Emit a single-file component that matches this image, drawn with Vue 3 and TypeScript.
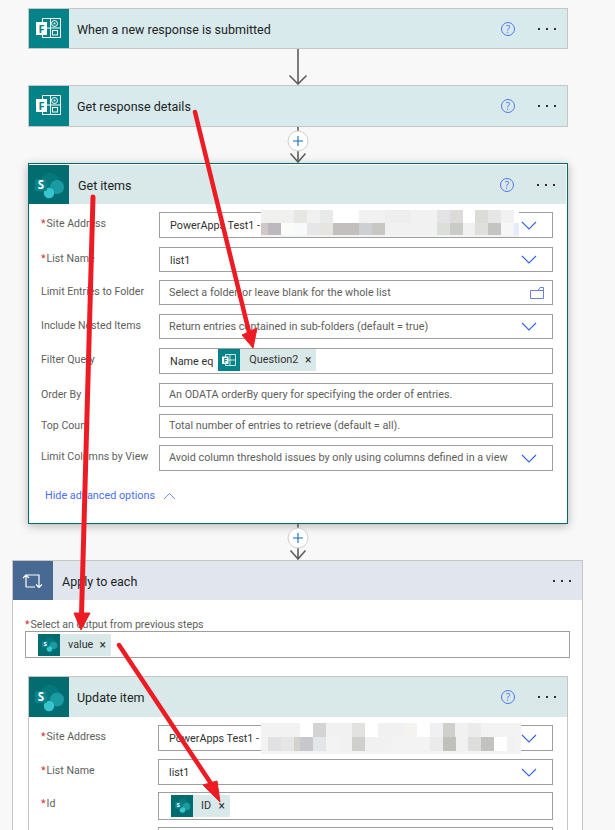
<script setup lang="ts">
interface Row {
  label: string
  req?: boolean
  value?: string
  hint?: string
  kind?: 'select' | 'folder'
  chip?: { icon: 'forms' | 'sp'; text: string; width: number; textGap: number }
  h: number
  gap: number
}
type Cell = [number, string]

const getRows: Row[] = [
  { label: 'Site Address', req: true, value: 'PowerApps Test1 -', kind: 'select', h: 26, gap: 0 },
  { label: 'List Name', req: true, value: 'list1', kind: 'select', h: 25, gap: 9 },
  { label: 'Limit Entries to Folder', hint: 'Select a folder, or leave blank for the whole list', kind: 'folder', h: 25, gap: 8 },
  { label: 'Include Nested Items', hint: 'Return entries contained in sub-folders (default = true)', kind: 'select', h: 25, gap: 9 },
  { label: 'Filter Query', value: 'Name eq', chip: { icon: 'forms', text: 'Question2', width: 98, textGap: 9 }, h: 26, gap: 9 },
  { label: 'Order By', hint: 'An ODATA orderBy query for specifying the order of entries.', h: 24, gap: 9 },
  { label: 'Top Count', hint: 'Total number of entries to retrieve (default = all).', h: 24, gap: 7 },
  { label: 'Limit Columns by View', hint: 'Avoid column threshold issues by only using columns defined in a view', kind: 'select', h: 26, gap: 7 }
]

const updateRows: Row[] = [
  { label: 'Site Address', req: true, value: 'PowerApps Test1 -', kind: 'select', h: 26, gap: 0 },
  { label: 'List Name', req: true, value: 'list1', kind: 'select', h: 26, gap: 8 },
  { label: 'Id', req: true, chip: { icon: 'sp', text: 'ID', width: 59, textGap: 8 }, h: 28, gap: 7 },
  { label: '', h: 26, gap: 7 }
]

const blurA: Cell[][] = [
  [[99, '#f0f0ef'], [39, '#e6e6e2'], [39, '#f0f0f0'], [39, '#e8eaea'], [78, '#fff'], [78, '#f1f1f1'], [78, '#eee'], [78, '#f1f1f1'], [39, '#e3e3e6'], [39, '#dcdbd9'], [36, '#fff'], [39, '#dbdbd8'], [39, '#e6e6e6'], [39, '#f1f1f1'], [15, '#fff']],
  [[21, '#cfc8c6'], [39, '#bcb8bd'], [39, '#fbfbf9'], [39, '#f7f9fb'], [39, '#e6e6e8'], [39, '#e6e5df'], [78, '#c2bfbe'], [39, '#ccd0d3'], [39, '#c8c7c4'], [156, '#f1f1f1'], [39, '#dcdfd8'], [39, '#c9cbc7'], [36, '#f1f1f1'], [39, '#dfdfdc'], [39, '#c4c4c2'], [39, '#f6f6f6'], [15, '#e6ebfb']]
]

const blurB: Cell[][] = [
  [[117, '#f2f2f2'], [39, '#fff'], [39, '#d4d4d4'], [78, '#f1f1f1'], [39, '#e2e3e0'], [39, '#fff'], [78, '#f1f1f1'], [39, '#f4f3f0'], [39, '#fff'], [39, '#f0f0f2'], [36, '#cfcfcb'], [39, '#f1f1f1'], [39, '#ebebeb'], [60, '#f3f3f3']],
  [[21, '#f3f3f3'], [39, '#e1e1e4'], [39, '#e6e6e6'], [18, '#d5d2cd'], [39, '#c7c8cc'], [39, '#e3e6e9'], [39, '#f3f3f3'], [39, '#f1f1f1'], [39, '#cfcfcc'], [78, '#f1f1f1'], [117, '#f3f3f3'], [39, '#ebebeb'], [39, '#c0c1bb'], [36, '#f1f1f1'], [39, '#dededc'], [39, '#c2c2c0'], [39, '#fff'], [21, '#f1f1f1']]
]
</script>

<template>
  <div class="page">
    <!-- Trigger -->
    <section class="card card-first">
      <header class="head teal">
        <span class="icon forms">
          <svg width="40" height="39" viewBox="0 0 40 39">
            <path d="M13.5 9.5H31.5V28.5H13.5Z M21.5 9.5V28.5 M13.5 19H31.5" fill="none" stroke="#fff" />
            <circle cx="25.5" cy="14.5" r="3" fill="none" stroke="#fff" />
            <circle cx="25.5" cy="14.5" r="1" fill="#fff" />
            <rect x="23.5" y="21.5" width="5" height="4.5" fill="none" stroke="#fff" />
            <rect x="7" y="13" width="11" height="13" fill="#fff" />
            <text x="12.5" y="23.5" class="tile-f">F</text>
          </svg>
        </span>
        <span class="title">When a new response is submitted</span>
        <svg class="help" width="16" height="16" viewBox="0 0 16 16">
          <circle cx="8" cy="8" r="6.5" />
          <text x="8" y="11.5">?</text>
        </svg>
        <span class="dots"><i></i><i></i><i></i></span>
      </header>
    </section>

    <div class="link">
      <svg width="20" height="36" viewBox="0 0 20 36">
        <path d="M10 0V35M1.5 26.5L10 35L18.5 26.5" fill="none" stroke="#605e5c" stroke-width="1.6" />
      </svg>
    </div>

    <section class="card card-second">
      <header class="head teal">
        <span class="icon forms">
          <svg width="40" height="40" viewBox="0 0 40 40">
            <path d="M13.5 9.5H31.5V28.5H13.5Z M21.5 9.5V28.5 M13.5 19H31.5" fill="none" stroke="#fff" />
            <circle cx="25.5" cy="14.5" r="3" fill="none" stroke="#fff" />
            <circle cx="25.5" cy="14.5" r="1" fill="#fff" />
            <rect x="23.5" y="21.5" width="5" height="4.5" fill="none" stroke="#fff" />
            <rect x="7" y="13" width="11" height="13" fill="#fff" />
            <text x="12.5" y="23.5" class="tile-f">F</text>
          </svg>
        </span>
        <span class="title">Get response details</span>
        <svg class="help" width="16" height="16" viewBox="0 0 16 16">
          <circle cx="8" cy="8" r="6.5" />
          <text x="8" y="11.5">?</text>
        </svg>
        <span class="dots"><i></i><i></i><i></i></span>
      </header>
    </section>

    <div class="link">
      <svg width="24" height="36" viewBox="0 0 24 36">
        <path d="M12 0V35M4.5 26.5L12 35L19.5 26.5" fill="none" stroke="#605e5c" stroke-width="1.6" />
        <circle cx="12" cy="14" r="10" fill="#fff" stroke="#d2d0ce" />
        <path d="M12 9V19M7 14H17" stroke="#0f6cbd" stroke-width="1.1" />
      </svg>
    </div>

    <!-- Get items -->
    <section class="card selected">
      <header class="head teal-soft">
        <span class="icon sp">
          <svg width="40" height="39" viewBox="0 0 40 39">
            <circle cx="21" cy="17" r="9.5" fill="#06787c" />
            <circle cx="28" cy="22" r="7" fill="#1a9ba1" />
            <circle cx="20" cy="28" r="5.2" fill="#37c6d0" />
            <rect x="6" y="14" width="12" height="12" rx="1" fill="#07858b" />
            <text x="12" y="24" class="tile-s">S</text>
          </svg>
        </span>
        <span class="title title-get">Get items</span>
        <svg class="help" width="16" height="16" viewBox="0 0 16 16">
          <circle cx="8" cy="8" r="6.5" />
          <text x="8" y="11.5">?</text>
        </svg>
        <span class="dots"><i></i><i></i><i></i></span>
      </header>
      <div class="form form-get">
        <div v-for="r in getRows" :key="r.label" class="row" :style="{ marginTop: r.gap + 'px' }">
          <label class="lab"><em v-if="r.req">*</em>{{ r.label }}</label>
          <div class="field" :style="{ height: r.h + 'px' }">
            <span v-if="r.value" class="val">{{ r.value }}</span>
            <span v-if="r.hint" class="hint">{{ r.hint }}</span>
            <span v-if="r.chip" class="chip" :style="{ width: r.chip.width + 'px' }">
              <span class="chip-icon forms">
                <svg width="22" height="22" viewBox="0 0 22 22">
                  <path d="M7.5 5.5H17.5V16.5H7.5Z M12 5.5V16.5 M7.5 11H17.5" fill="none" stroke="#fff" stroke-width=".8" />
                  <rect x="4" y="7.5" width="6.5" height="7.5" fill="#fff" />
                  <text x="7.2" y="13.5" class="mini-f">F</text>
                </svg>
              </span>
              <span class="chip-text" :style="{ marginLeft: r.chip.textGap + 'px' }">{{ r.chip.text }}</span>
              <span class="chip-x">×</span>
            </span>
            <svg v-if="r.kind === 'select'" class="chev" width="16" height="9" viewBox="0 0 16 9">
              <path d="M1 1L8 8L15 1" fill="none" stroke="#3563ec" stroke-width="1.1" />
            </svg>
            <svg v-if="r.kind === 'folder'" class="folder" width="16" height="14" viewBox="0 0 16 14">
              <path d="M1.5 4.5H9L11 1.5H14.5V12.5H1.5Z M9 4.5H14.5" fill="none" stroke="#6a7fe0" />
            </svg>
          </div>
        </div>
        <div class="advanced">
          <span>Hide advanced options</span>
          <svg width="13" height="8" viewBox="0 0 13 8"><path d="M1 7L6.5 1.5L12 7" fill="none" stroke="#6d8cf0" /></svg>
        </div>
      </div>
    </section>

    <div class="link">
      <svg width="24" height="36" viewBox="0 0 24 36">
        <path d="M12 0V35M4.5 26.5L12 35L19.5 26.5" fill="none" stroke="#605e5c" stroke-width="1.6" />
        <circle cx="12" cy="14" r="10" fill="#fff" stroke="#d2d0ce" />
        <path d="M12 9V19M7 14H17" stroke="#0f6cbd" stroke-width="1.1" />
      </svg>
    </div>

    <!-- Apply to each -->
    <section class="loop">
      <header class="head slate">
        <span class="icon loop-icon">
          <svg width="40" height="39" viewBox="0 0 40 39">
            <path d="M13 26V14H26V26M10 17L13 14L16 17M23 23.5L26 26.5L29 23.5M13 26H22" fill="none" stroke="#fff" stroke-width="1.2" />
          </svg>
        </span>
        <span class="title title-loop">Apply to each</span>
        <span class="dots"><i></i><i></i><i></i></span>
      </header>
      <div class="loop-body">
        <label class="lab output"><em>*</em>Select an output from previous steps</label>
        <div class="field output-field">
          <span class="chip chip-value">
            <span class="chip-icon sp">
              <svg width="22" height="22" viewBox="0 0 22 22">
                <circle cx="12" cy="8.5" r="5" fill="#06787c" />
                <circle cx="15.5" cy="11.5" r="3.8" fill="#1a9ba1" />
                <circle cx="11.5" cy="15" r="2.8" fill="#37c6d0" />
                <rect x="4" y="7" width="6.5" height="6.5" fill="#07858b" />
                <text x="7.2" y="12.4" class="mini-s">S</text>
              </svg>
            </span>
            <span class="chip-text value-text">value</span>
            <span class="chip-x">×</span>
          </span>
        </div>

        <section class="card update">
          <header class="head teal-soft">
            <span class="icon sp">
              <svg width="39" height="40" viewBox="0 0 39 40">
                <circle cx="21" cy="17" r="9.5" fill="#06787c" />
                <circle cx="28" cy="22.5" r="7" fill="#1a9ba1" />
                <circle cx="20" cy="29" r="5.2" fill="#37c6d0" />
                <rect x="6" y="14" width="12" height="12" rx="1" fill="#07858b" />
                <text x="12" y="24" class="tile-s">S</text>
              </svg>
            </span>
            <span class="title">Update item</span>
            <svg class="help" width="16" height="16" viewBox="0 0 16 16">
              <circle cx="8" cy="8" r="6.5" />
              <text x="8" y="11.5">?</text>
            </svg>
            <span class="dots"><i></i><i></i><i></i></span>
          </header>
          <div class="form form-update">
            <div v-for="r in updateRows" :key="r.label" class="row" :style="{ marginTop: r.gap + 'px' }">
              <label class="lab"><em v-if="r.req">*</em>{{ r.label }}</label>
              <div class="field" :style="{ height: r.h + 'px' }">
                <span v-if="r.value" class="val">{{ r.value }}</span>
                <span v-if="r.chip" class="chip chip-id" :style="{ width: r.chip.width + 'px' }">
                  <span class="chip-icon sp">
                    <svg width="22" height="22" viewBox="0 0 22 22">
                      <circle cx="12" cy="8.5" r="5" fill="#06787c" />
                      <circle cx="15.5" cy="11.5" r="3.8" fill="#1a9ba1" />
                      <circle cx="11.5" cy="15" r="2.8" fill="#37c6d0" />
                      <rect x="4" y="7" width="6.5" height="6.5" fill="#07858b" />
                      <text x="7.2" y="12.4" class="mini-s">S</text>
                    </svg>
                  </span>
                  <span class="chip-text" :style="{ marginLeft: r.chip.textGap + 'px' }">{{ r.chip.text }}</span>
                  <span class="chip-x">×</span>
                </span>
                <svg v-if="r.kind === 'select'" class="chev" width="16" height="9" viewBox="0 0 16 9">
                  <path d="M1 1L8 8L15 1" fill="none" stroke="#3563ec" stroke-width="1.1" />
                </svg>
              </div>
            </div>
          </div>
        </section>
      </div>
    </section>

    <!-- Redaction mosaics -->
    <div class="mosaic mosaic-a">
      <div v-for="(line, i) in blurA" :key="i" class="mosaic-line">
        <i v-for="(c, j) in line" :key="j" :style="{ width: c[0] / 3 + 'px', background: c[1] }"></i>
      </div>
    </div>
    <div class="mosaic mosaic-b">
      <div v-for="(line, i) in blurB" :key="i" class="mosaic-line">
        <i v-for="(c, j) in line" :key="j" :style="{ width: c[0] / 3 + 'px', background: c[1] }"></i>
      </div>
    </div>

    <!-- Annotation arrows -->
    <svg class="marks" width="615" height="830" viewBox="0 0 615 830">
      <g fill="#ed1c24" stroke="#ed1c24">
        <path d="M195 112L249 332" fill="none" stroke-width="4.5" stroke-linecap="round" />
        <path d="M253 348L242 335L257 328Z" />
        <path d="M93 197L81.5 615" fill="none" stroke-width="5" stroke-linecap="round" />
        <path d="M81 630L74 613L90 613Z" />
        <path d="M119 645L212 785" fill="none" stroke-width="4.5" stroke-linecap="round" />
        <path d="M220 802L203 785L217 781Z" />
      </g>
    </svg>
  </div>
</template>

<style>
html, body { margin: 0; background: #f8f8f8; overflow: hidden; }
</style>

<style scoped>
.page {
  position: relative;
  box-sizing: border-box;
  width: 615px;
  height: 830px;
  overflow: hidden;
  padding-top: 8px;
  background: #f8f8f8;
  font-family: Roboto, "Open Sans", sans-serif;
  color: #323130;
}
.card {
  box-sizing: border-box;
  width: 540px;
  margin-left: 28px;
  background: #fff;
  border: 1px solid #c8c6c4;
}
.card-first { height: 41px; }
.card-second { height: 42px; }
.selected {
  height: 361px;
  border: 1px solid #00696c;
  border-left-width: 1.5px;
  padding: 1px 1px 0 0;
  box-shadow: 0 2px 9px rgba(0, 0, 0, .28);
}
.head {
  display: flex;
  align-items: center;
  height: 39px;
}
.card-first .head { height: 39px; }
.card-second .head { height: 40px; }
.teal { background: #d9eaed; }
.teal-soft { background: #d9e8e8; }
.slate { background: #e1e6ee; }
.icon {
  display: flex;
  flex: none;
  width: 40px;
  height: 100%;
}
.forms { background: #038387; }
.sp { background: #036c70; }
.loop-icon { background: #486991; }
.title {
  flex: 1;
  margin-left: 8px;
  padding-top: 1px;
  font-size: 12.5px;
  color: #201f1e;
}
.title-get { margin-left: 9px; }
.title-loop { margin-left: 9px; }
.tile-f {
  font: 700 11px "Open Sans", sans-serif;
  fill: #038387;
  text-anchor: middle;
}
.tile-s {
  font: 700 11.5px "Open Sans", sans-serif;
  fill: #fff;
  text-anchor: middle;
}
.mini-f {
  font: 700 6.5px "Open Sans", sans-serif;
  fill: #038387;
  text-anchor: middle;
}
.mini-s {
  font: 700 6px "Open Sans", sans-serif;
  fill: #fff;
  text-anchor: middle;
}
.help {
  flex: none;
  margin-right: 22px;
}
.help circle { fill: none; stroke: #4d78f0; stroke-width: 1; }
.help text {
  font: 10px "Open Sans", sans-serif;
  fill: #4d78f0;
  text-anchor: middle;
}
.dots {
  display: flex;
  flex: none;
  gap: 6px;
  margin-right: 11px;
}
.dots i {
  width: 2px;
  height: 2px;
  background: #323130;
}
.link {
  display: flex;
  justify-content: center;
  width: 540px;
  height: 36px;
  margin-left: 28px;
}
.link svg { display: block; }
.form { padding-left: 12px; }
.form-get { padding-top: 8px; }
.form-update { padding-top: 8px; }
.row {
  display: flex;
  align-items: flex-start;
}
.lab {
  flex: none;
  width: 118px;
  padding-top: 4px;
  font-size: 10.6px;
  line-height: 16px;
  color: #605e5c;
  white-space: nowrap;
}
.lab em {
  margin-right: 1px;
  font-style: normal;
  color: #d13438;
}
.field {
  position: relative;
  display: flex;
  flex: none;
  align-items: center;
  box-sizing: border-box;
  width: 394px;
  padding-left: 10px;
  background: #fff;
  border: 1px solid #a19f9d;
  font-size: 10.8px;
  white-space: nowrap;
}
.val { color: #323130; padding-top: 1px; }
.hint { color: #605e5c; margin-left: -1px; margin-top: -1px; }
.chev {
  position: absolute;
  right: 15px;
  flex: none;
}
.folder {
  position: absolute;
  right: 7px;
}
.chip {
  display: flex;
  align-items: center;
  box-sizing: border-box;
  height: 22px;
  background: #d9e8e8;
  color: #323130;
}
.val + .chip { margin-left: 5px; margin-top: -2px; }
.chip-id { margin-left: 2px; }
.chip-icon {
  display: flex;
  flex: none;
  width: 22px;
  height: 22px;
}
.chip-text { font-size: 10.8px; padding-bottom: 1px; }
.chip-x {
  margin-left: auto;
  margin-right: 5px;
  font-size: 12px;
  color: #323130;
}
.advanced {
  display: flex;
  align-items: center;
  gap: 8px;
  margin-top: 17px;
  padding-left: 4px;
  font-size: 10.8px;
  line-height: 16px;
  color: #4a6ef0;
}
.loop {
  box-sizing: border-box;
  width: 571px;
  height: 300px;
  margin-left: 12px;
  background: #fff;
  border: 1px solid #c8c6c4;
}
.loop .head { height: 39px; }
.loop-body { padding: 16px 12px 0; }
.output {
  display: block;
  width: auto;
  padding: 2px 0 0;
  line-height: 13px;
}
.output-field {
  width: 545px;
  height: 27px;
  padding-left: 12px;
}
.chip-value { width: 73px; }
.value-text { margin-left: 8px; }
.update {
  margin: 18px 0 0 3px;
  width: 540px;
  height: 200px;
}
.update .head { height: 40px; }
.update .field { width: 395px; }
.update .lab { width: 117px; }
.mosaic {
  position: absolute;
  display: flex;
  flex-direction: column;
}
.mosaic-a {
  left: 261px;
  top: 210px;
  width: 258px;
  background: #f4f4f4;
}
.mosaic-a .mosaic-line { height: 12.5px; }
.mosaic-a .mosaic-line:last-child { margin-bottom: 1.5px; }
.mosaic-b {
  left: 261px;
  top: 723px;
  width: 260px;
  background: #f3f3f3;
}
.mosaic-b .mosaic-line { height: 14px; }
.mosaic-b .mosaic-line:last-child { margin-bottom: 3px; }
.mosaic-line { display: flex; }
.mosaic-line i { display: block; flex: none; height: 100%; }
.marks {
  position: absolute;
  left: 0;
  top: 0;
  pointer-events: none;
}
</style>
